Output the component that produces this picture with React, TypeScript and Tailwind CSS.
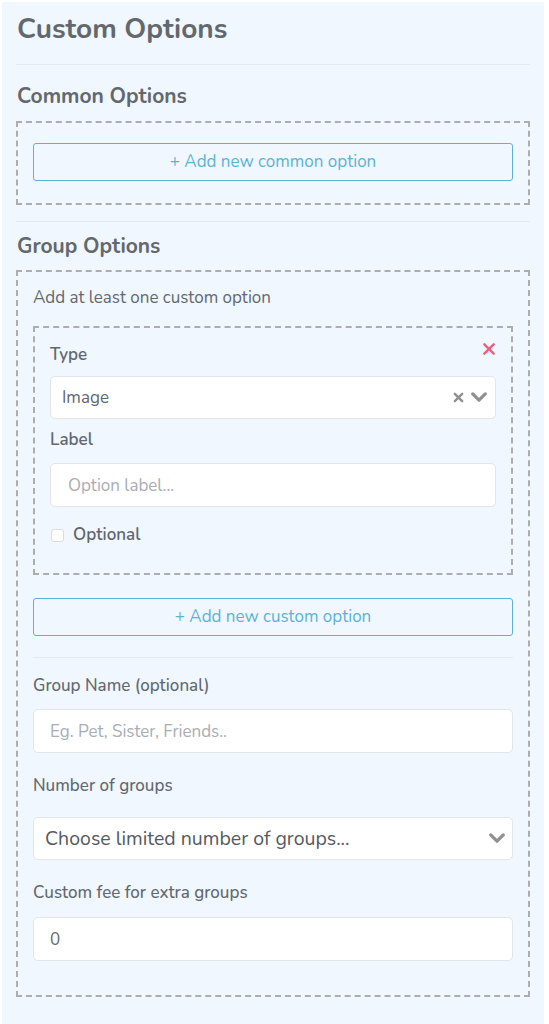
import type { FC } from "react";

const font = { fontFamily: '"Nunito", "Lato", "Noto Sans", sans-serif' };

const Chevron: FC<{ className?: string }> = ({ className }) => (
  <svg viewBox="0 0 20 14" className={className} fill="none">
    <polyline points="3,3 10,10 17,3" stroke="#909090" strokeWidth="3.6" strokeLinecap="round" strokeLinejoin="round" />
  </svg>
);

const SmallX: FC<{ className?: string; color?: string; width?: number }> = ({ className, color = "#909090", width = 3 }) => (
  <svg viewBox="0 0 12 12" className={className} fill="none">
    <path d="M2 2 L10 10 M10 2 L2 10" stroke={color} strokeWidth={width} strokeLinecap="round" />
  </svg>
);

const FieldLabel: FC<{ children: React.ReactNode; className?: string }> = ({ children, className = "" }) => (
  <div className={`text-[17px] leading-[22px] text-[#626870] ${className}`}>{children}</div>
);

const TextInput: FC<{ placeholder?: string; value?: string; className?: string }> = ({ placeholder, value, className = "" }) => (
  <input
    readOnly
    placeholder={placeholder}
    defaultValue={value}
    style={font}
    className={`block w-full h-[44px] rounded-[5px] border border-[#e2e5e9] bg-white text-[17px] text-[#5f666e] placeholder:text-[#a9adb3] outline-none ${className}`}
  />
);

const AddButton: FC<{ label: string }> = ({ label }) => (
  <button
    style={font}
    className="block w-full h-[38px] rounded-[3px] border-[1.5px] border-[#5db2d4] bg-transparent text-[17px] text-[#5db2d4]"
  >
    + {label}
  </button>
);

export default function App() {
  return (
    <div style={font} className="min-h-screen bg-white pt-[2px] pl-[2px] pr-[5px]">
      <div className="min-h-[1030px] bg-[#f0f7fe] pt-[11px] px-[14px] pb-[40px]">
        <h1 className="text-[28px] leading-[32px] font-bold text-[#63686e] pl-[1px]">Custom Options</h1>
        <div className="mt-[19px] h-px bg-[#e3eaf1]" />

        <h2 className="mt-[17px] text-[21px] leading-[28px] font-bold text-[#63686e] pl-[1px]">Common Options</h2>
        <div className="mt-[11px] border-2 border-dashed border-[#adadad] px-[15px] pt-[20px] pb-[22px]">
          <AddButton label="Add new common option" />
        </div>
        <div className="mt-[16px] h-px bg-[#e3eaf1]" />

        <h2 className="mt-[10px] text-[21px] leading-[28px] font-bold text-[#63686e] pl-[1px]">Group Options</h2>
        <div className="mt-[10px] border-2 border-dashed border-[#adadad] px-[15px] pt-[15px] pb-[34px]">
          <div className="text-[17px] leading-[22px] text-[#63686e]">Add at least one custom option</div>

          <div className="relative mt-[17px] border-2 border-dashed border-[#adadad] px-[15px] pt-[16px] pb-[27px]">
            <SmallX className="absolute right-[15px] top-[14px] w-[14px] h-[14px]" color="#ea5f7c" width={2} />
            <FieldLabel className="font-semibold">Type</FieldLabel>
            <div className="mt-[10px] h-[43px] rounded-[5px] border border-[#e2e5e9] bg-white flex items-center pl-[11px] pr-[7px]">
              <span className="flex-1 text-[17px] text-[#5f666e]">Image</span>
              <SmallX className="w-[11px] h-[11px] mr-[6px]" width={2.6} />
              <Chevron className="w-[18px] h-[13px]" />
            </div>
            <FieldLabel className="mt-[10px] font-semibold">Label</FieldLabel>
            <TextInput className="mt-[12px] pl-[17px]" placeholder="Option label..." />
            <div className="mt-[17px] flex items-center h-[22px]">
              <span className="shrink-0 w-[13px] h-[13px] ml-[1px] rounded-[3px] border border-[#d9dce0] bg-white" />
              <span className="ml-[9px] text-[17px] font-semibold text-[#5f666e]">Optional</span>
            </div>
          </div>

          <div className="mt-[23px]">
            <AddButton label="Add new custom option" />
          </div>
          <div className="mt-[21px] h-px bg-[#e3eaf1]" />

          <FieldLabel className="mt-[17px] font-medium">Group Name (optional)</FieldLabel>
          <TextInput className="mt-[12px] pl-[16px] h-[43px]" placeholder="Eg. Pet, Sister, Friends.." />

          <FieldLabel className="mt-[22px] font-medium">Number of groups</FieldLabel>
          <div className="mt-[20px] h-[43px] rounded-[5px] border border-[#e2e5e9] bg-white flex items-center pl-[11px] pr-[6px]">
            <span className="flex-1 text-[19.5px] text-[#545a61]">Choose limited number of groups...</span>
            <Chevron className="w-[18px] h-[13px]" />
          </div>

          <FieldLabel className="mt-[22px] font-medium">Custom fee for extra groups</FieldLabel>
          <TextInput className="mt-[13px] pl-[16px] h-[43px]" value="0" />
        </div>
      </div>
    </div>
  );
}
